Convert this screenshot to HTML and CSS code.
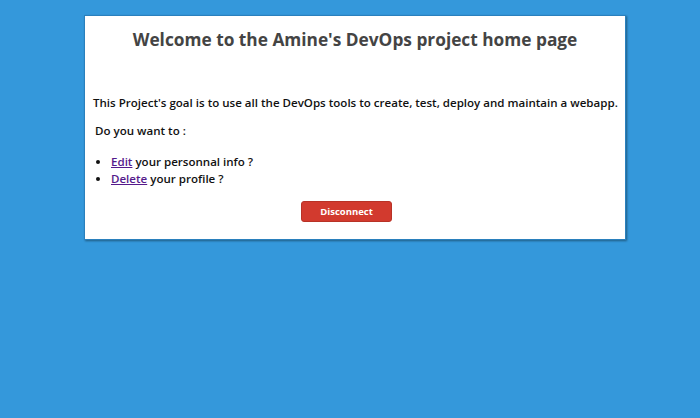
FILE: index.html
```html
<!DOCTYPE html>
<html>
<head>
<meta charset="utf-8">
<link rel="stylesheet" href="styles.css">
</head>
<body>
<div class="card">
  <h1 class="title">Welcome to the Amine's DevOps project home page</h1>
  <p class="goal">This Project's goal is to use all the DevOps tools to create, test, deploy and maintain a webapp.</p>
  <p class="ask">Do you want to :</p>
  <ul class="actions">
    <li><a href="#">Edit</a> your personnal info ?</li>
    <li><a href="#">Delete</a> your profile ?</li>
  </ul>
  <div class="btn-row"><button class="btn">Disconnect</button></div>
</div>
</body>
</html>
```
FILE: styles.css
```css
html, body { margin: 0; padding: 0; }
body {
  background: #3498db;
  font-family: "Open Sans", sans-serif;
  height: 418px;
  padding-top: 15px;
  box-sizing: border-box;
}
.card {
  margin-left: 84px;
  width: 542px;
  box-sizing: border-box;
  background: #fff;
  border: 1px solid #2a80bd;
  box-shadow: 1px 1px 2px rgba(0,0,0,0.4);
  padding: 9px 6px 17px 8px;
  color: #111;
}
.title {
  margin: 2px 0 0 -2px;
  text-align: center;
  font-size: 17.3px;
  font-weight: 700;
  color: #444;
  line-height: 26px;
}
.goal {
  margin: 41px 0 0 0;
  font-size: 11.55px;
  font-weight: 600;
  line-height: 18px;
  white-space: nowrap;
}
.ask {
  margin: 10px 0 0 2px;
  font-size: 11.55px;
  font-weight: 600;
  line-height: 18px;
}
.actions {
  margin: 13px 0 0 0;
  padding-left: 18px;
  font-size: 11.55px;
  font-weight: 600;
  line-height: 17px;
}
.actions a { color: #551a8b; }
.btn-row { display: flex; justify-content: flex-start; padding-left: 208px; margin-top: 14px; }
.btn {
  width: 91px;
  height: 21px;
  background: #d23a2e;
  color: #fff;
  border: 1px solid #b83226;
  border-radius: 3px;
  font-family: "Open Sans", sans-serif;
  font-weight: 700;
  font-size: 9.5px;
  padding: 0;
}
```
